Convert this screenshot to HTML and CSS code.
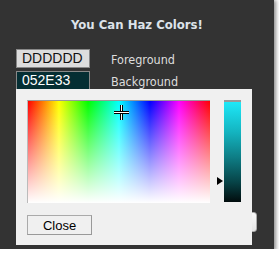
FILE: index.html
```html
<!DOCTYPE html>
<html>
<head>
	<title>You Can Haz Colors!</title>
	<meta name="viewport" content="width=device-width,initial-scale=1.0">
	<link rel="stylesheet" href="styles.css">
</head>
<body>
<div class="panel">
	<h1 class="title">You Can Haz Colors!</h1>
	<div class="row">
		<input class="hex fg" type="text" value="DDDDDD">
		<span class="lbl">Foreground</span>
	</div>
	<div class="row">
		<input class="hex bg" type="text" value="052E33">
		<span class="lbl">Background</span>
	</div>
	<button class="apply_btn"></button>

	<div class="picker">
		<div class="picker_top">
			<div class="spectrum">
				<div class="cross"></div>
			</div>
			<div class="shade_wrap">
				<span class="arrow"></span>
				<div class="shade"></div>
			</div>
		</div>
		<button class="close_btn">Close</button>
	</div>
</div>
</body>
</html>
```

FILE: styles.css
```css
*{margin: 0;padding: 0;box-sizing: border-box;}
body{background: #fff;font-family: Tahoma, "DejaVu Sans Condensed", sans-serif;}
.panel{position: relative;width: 274px;height: 249px;background: #333;box-shadow: 1px 1px 4px 1px rgba(0,0,0,0.45);padding: 16px 16px 0 16px;}
.title{font-family: "DejaVu Sans Condensed", "DejaVu Sans", sans-serif;font-size: 13px;font-weight: bold;color: #dde3ea;text-align: center;height: 31px;line-height: 17px;}
.row{display: flex;align-items: center;height: 22px;}
.hex{width: 74px;height: 19px;border: 1px solid #888;font-family: "Liberation Sans", Arial, sans-serif;font-size: 14px;padding: 0 0 0 5px;outline: none;}
.fg{background: #ddd;color: #111;}
.bg{background: #052e33;color: #fff;}
.lbl{margin-left: 21px;font-family: "DejaVu Sans Condensed", "DejaVu Sans", sans-serif;font-size: 12.5px;color: #ddd;padding-top: 2px;}
.apply_btn{position: absolute;left: 236px;top: 212px;width: 21px;height: 20px;border: 1px solid #aaa;border-radius: 3px;background: linear-gradient(#fafafa,#e4e4e4);}
.picker{position: absolute;left: 16px;top: 89px;width: 236px;height: 156px;background: #f0f0f0;padding: 11px 0 0 11px;z-index: 2;}
.picker_top{display: flex;height: 103px;}
.spectrum{position: relative;width: 183px;height: 103px;border-top: 1px solid #999;border-left: 1px solid #bbb;
	background: linear-gradient(to bottom, rgba(255,255,255,0) 0%, rgba(255,255,255,1) 100%),
	linear-gradient(to right, #f00 0%, #ff0 17%, #0f0 33%, #0ff 50%, #00f 67%, #f0f 83%, #f00 100%);}
.cross{position: absolute;left: 86px;top: 4px;width: 15px;height: 15px;}
.cross:before{content: "";position: absolute;left: 6px;top: 0;width: 3px;height: 15px;background: #fff;border-left: 1px solid #000;border-right: 1px solid #000;box-sizing: border-box;}
.cross:after{content: "";position: absolute;left: 0;top: 6px;width: 15px;height: 3px;background: #fff;border-top: 1px solid #000;border-bottom: 1px solid #000;box-sizing: border-box;}
.shade_wrap{display: flex;align-items: flex-start;margin-left: 7px;}
.arrow{width: 0;height: 0;margin-top: 77px;margin-right: 1px;border-top: 4.5px solid transparent;border-bottom: 4.5px solid transparent;border-left: 6px solid #000;}
.shade{width: 17px;height: 102px;border-top: 2px solid #999;background: linear-gradient(#1ee8f8 0%, #14b4c0 30%, #0e7e86 55%, #074448 80%, #020c0d 100%);}
.close_btn{display: block;margin-top: 12px;width: 65px;height: 20px;border: 1px solid #aaa;border-right-color: #999;border-bottom-color: #999;background: #f0f0f0;font-family: "Liberation Sans", Arial, sans-serif;font-size: 13px;color: #000;}
```
